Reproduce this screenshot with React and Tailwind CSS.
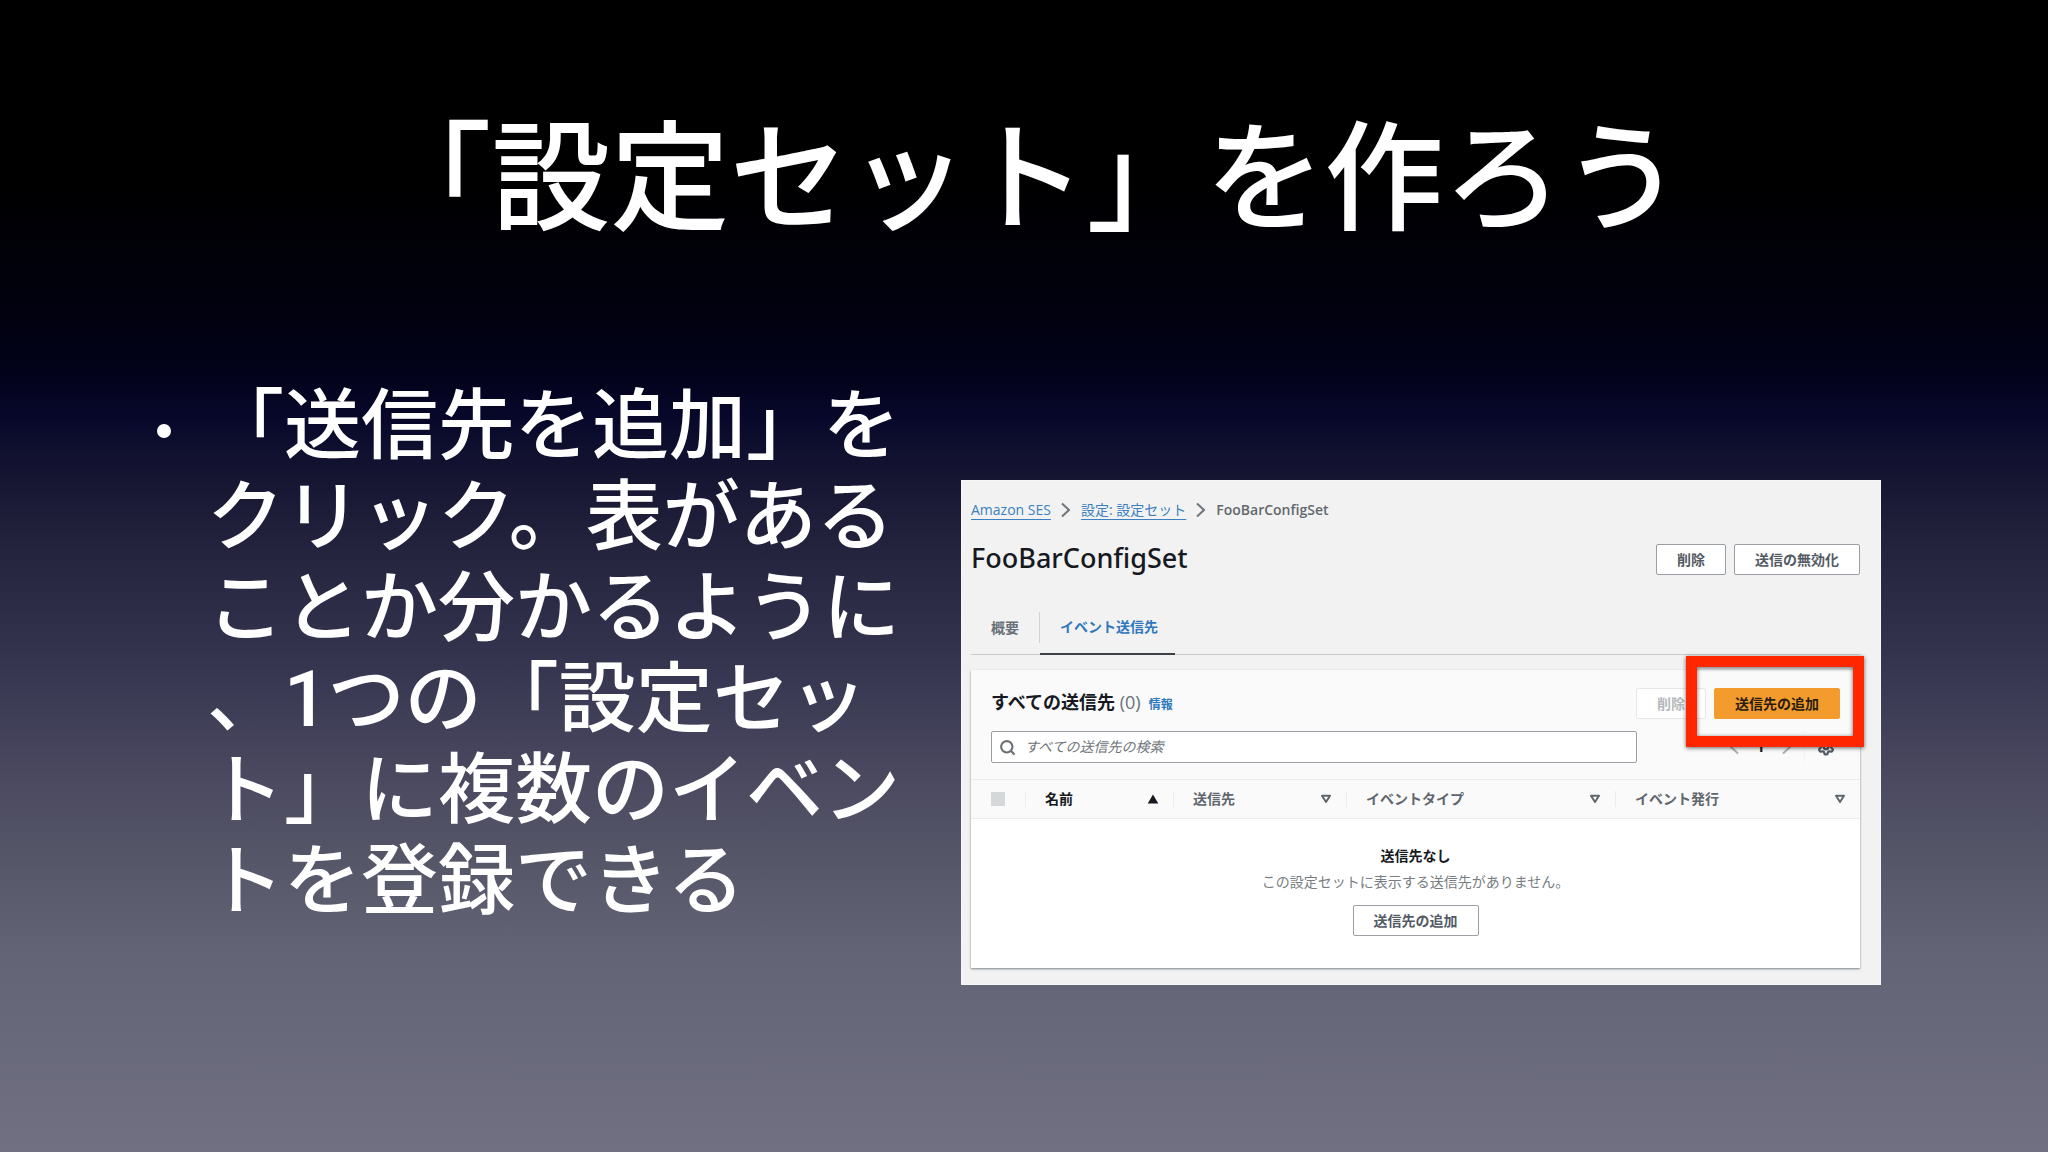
import { Search, Settings } from 'lucide-react';

const bodyLines = [
    '「送信先を追加」を',
    'クリック。表がある',
    'ことか分かるように',
    '、1つの「設定セッ',
    'ト」に複数のイベン',
    'トを登録できる',
];

const columns = [
    { label: '名前', sorted: true },
    { label: '送信先', sorted: false },
    { label: 'イベントタイプ', sorted: false },
    { label: 'イベント発行', sorted: false },
];

function Chevron() {
    return (
        <svg width="10" height="16" viewBox="0 0 10 16" fill="none" stroke="#6f757b" strokeWidth="2" aria-hidden="true">
            <path d="M1 1.5 8 8 1 14.5" />
        </svg>
    );
}

function SortIcon({ sorted }) {
    return sorted ? (
        <svg width="12" height="10" viewBox="0 0 12 10" fill="#16191f" aria-hidden="true">
            <path d="M6 0.5 11.3 9.5H0.7z" />
        </svg>
    ) : (
        <svg width="12" height="10" viewBox="0 0 12 10" fill="none" stroke="#5f666d" strokeWidth="2" strokeLinejoin="round" aria-hidden="true">
            <path d="M2 1.8H10L6 8z" />
        </svg>
    );
}

function Button({ children, variant = 'normal', disabled = false }) {
    const styles = {
        normal: 'border-[#999fa4] bg-white text-[#545b64]',
        primary: 'border-[#f39c2d] bg-[#f39c2d] text-[#2a1d10]',
        disabled: 'border-[#e6e8e8] bg-white text-[#b4babb]',
    };

    return (
        <button
            type="button"
            disabled={disabled}
            className={`h-[31px] rounded-xs border px-5 text-sm font-bold whitespace-nowrap ${styles[disabled ? 'disabled' : variant]}`}
        >
            {children}
        </button>
    );
}

function Console() {
    return (
        <div className="mt-[104px] self-start border border-[#f6f6fb] bg-[#f2f2f2] pt-[18px] pr-[10px] pb-4 pl-[9px] font-['Open_Sans','Noto_Sans_CJK_JP',sans-serif] text-sm text-[#16191f]">
            {/* Breadcrumb */}
            <nav className="flex h-[22px] items-center gap-[10px] leading-[22px]">
                <a href="#ses" className="text-[#3a7fc0] underline underline-offset-4">Amazon SES</a>
                <Chevron />
                <a href="#sets" className="text-[#3a7fc0] underline underline-offset-4">設定: 設定セット</a>
                <Chevron />
                <span className="font-semibold text-[#62686e]">FooBarConfigSet</span>
            </nav>

            {/* Header */}
            <div className="mt-[23px] flex h-[31px] items-start justify-between pr-[10px]">
                <h2 className="font-['Noto_Sans',sans-serif] text-[27px] leading-[28px] font-medium">FooBarConfigSet</h2>
                <div className="flex gap-2">
                    <Button>削除</Button>
                    <Button>送信の無効化</Button>
                </div>
            </div>

            {/* Tabs */}
            <div className="mt-[26px] mr-[10px] flex h-[54px] border-b border-[#c8cccc] font-bold">
                <div className="flex items-center">
                    <button type="button" className="px-5 text-[#687078]">概要</button>
                    <span className="h-[31px] w-px bg-[#cfd3d3]" />
                </div>
                <button type="button" className="-mb-px border-b-2 border-[#3d4045] pr-[17px] pl-5 text-[#2f78bd]">
                    イベント送信先
                </button>
            </div>

            {/* Destinations */}
            <section className="mt-[15px] mr-[10px] bg-[#fafafa] shadow-[0_1px_2px_rgba(0,20,30,0.5)]">
                <div className="px-5 pt-[18px] pb-4">
                    <div className="flex h-[31px] items-start justify-between">
                        <div className="flex items-baseline">
                            <h3 className="text-lg leading-[29px] font-bold">
                                すべての送信先 <span className="font-normal text-[#687078]">(0)</span>
                            </h3>
                            <a href="#info" className="ml-2 text-xs font-bold text-[#2f78bd]">情報</a>
                        </div>
                        <div className="flex gap-2">
                            <Button disabled>削除</Button>
                            <div className="relative">
                                <Button variant="primary">送信先の追加</Button>
                                <div className="pointer-events-none absolute -top-8 -right-6 -bottom-7 -left-7 z-10 border-[11px] border-[#ff2600] shadow-[0_1px_4px_rgba(0,0,0,0.6),inset_0_1px_4px_rgba(0,0,0,0.6)]" />
                            </div>
                        </div>
                    </div>
                    <div className="mt-3 flex h-8 items-center justify-between">
                        <label className="relative block w-[646px]">
                            <Search size={17} strokeWidth={3} className="absolute top-2 left-2 text-[#6b7177]" />
                            <input
                                type="search"
                                aria-label="すべての送信先の検索"
                                placeholder="すべての送信先の検索"
                                className="h-8 w-full rounded-xs border border-[#999fa4] bg-white pr-3 pb-px pl-[33px] placeholder:text-[#70767b] placeholder:italic"
                            />
                        </label>
                        <div className="flex items-center pr-[5px] text-[#545b64]">
                            <button type="button" aria-label="前へ">
                                <svg width="10" height="16" viewBox="0 0 10 16" fill="none" stroke="#aab0b3" strokeWidth="2" aria-hidden="true">
                                    <path d="M9 1.5 2 8 9 14.5" />
                                </svg>
                            </button>
                            <span className="w-[43px] text-center font-bold text-[#16191f]">1</span>
                            <button type="button" aria-label="次へ">
                                <svg width="10" height="16" viewBox="0 0 10 16" fill="none" stroke="#aab0b3" strokeWidth="2" aria-hidden="true">
                                    <path d="M1 1.5 8 8 1 14.5" />
                                </svg>
                            </button>
                            <span className="mx-3 h-8 w-px bg-[#f3f4f4]" />
                            <button type="button" aria-label="設定">
                                <Settings size={18} strokeWidth={3} />
                            </button>
                        </div>
                    </div>
                </div>

                <table className="w-full table-fixed border-collapse">
                    <colgroup>
                        <col className="w-[54px]" />
                        <col className="w-[148px]" />
                        <col className="w-[173px]" />
                        <col className="w-[269px]" />
                        <col />
                    </colgroup>
                    <thead>
                        <tr className="h-[39px] border-y border-[#eaeded]">
                            <th className="p-0 pl-5 text-left">
                                <input
                                    type="checkbox"
                                    disabled
                                    aria-label="すべて選択"
                                    className="block size-[14px] appearance-none bg-[#d5d8d8]"
                                />
                            </th>
                            {columns.map((column) => (
                                <th key={column.label} className="p-0">
                                    <div className="flex h-4 items-center justify-between border-l border-[#eceeee] pr-[14px] pl-[19px]">
                                        <span className={column.sorted ? 'text-[#16191f]' : 'text-[#5f666d]'}>
                                            {column.label}
                                        </span>
                                        <button type="button" aria-label={`${column.label}で並べ替え`}>
                                            <SortIcon sorted={column.sorted} />
                                        </button>
                                    </div>
                                </th>
                            ))}
                        </tr>
                    </thead>
                    <tbody>
                        <tr className="bg-white">
                            <td colSpan="5" className="px-5 pt-[26px] pb-8 text-center">
                                <p className="leading-[22px] font-bold">送信先なし</p>
                                <p className="mt-1 mb-3 leading-[22px] text-[#777d82]">
                                    この設定セットに表示する送信先がありません。
                                </p>
                                <Button>送信先の追加</Button>
                            </td>
                        </tr>
                    </tbody>
                </table>
            </section>
        </div>
    );
}

export default function App() {
    return (
        <main className="min-h-screen bg-[linear-gradient(180deg,#000000_0%,#000001_16%,#01010e_26%,#020219_32%,#07072a_36%,#171733_42%,#25243f_48%,#35344f_57%,#49485f_67%,#555568_74%,#646477_83%,#707082_100%)] pt-[113px] pr-[167px] pb-16 pl-[157px] font-['Noto_Sans_CJK_JP',sans-serif] text-white">
            <h1 className="pl-4 text-center text-[119px] leading-[112px] font-medium whitespace-nowrap">
                「設定セット」を作ろう
            </h1>

            <div className="mt-[151px] grid grid-cols-[756fr_920fr] gap-12">
                <ul className="font-['Roboto','Noto_Sans_CJK_JP',sans-serif] font-medium">
                    <li className="flex gap-9 text-[77px] leading-[91px] whitespace-nowrap">
                        <span className="mt-12 size-[14px] shrink-0 rounded-full bg-white" />
                        <p className="pt-[6px]">
                            {bodyLines.map((line) => (
                                <span key={line} className="block">{line}</span>
                            ))}
                        </p>
                    </li>
                </ul>
                <Console />
            </div>
        </main>
    );
}
